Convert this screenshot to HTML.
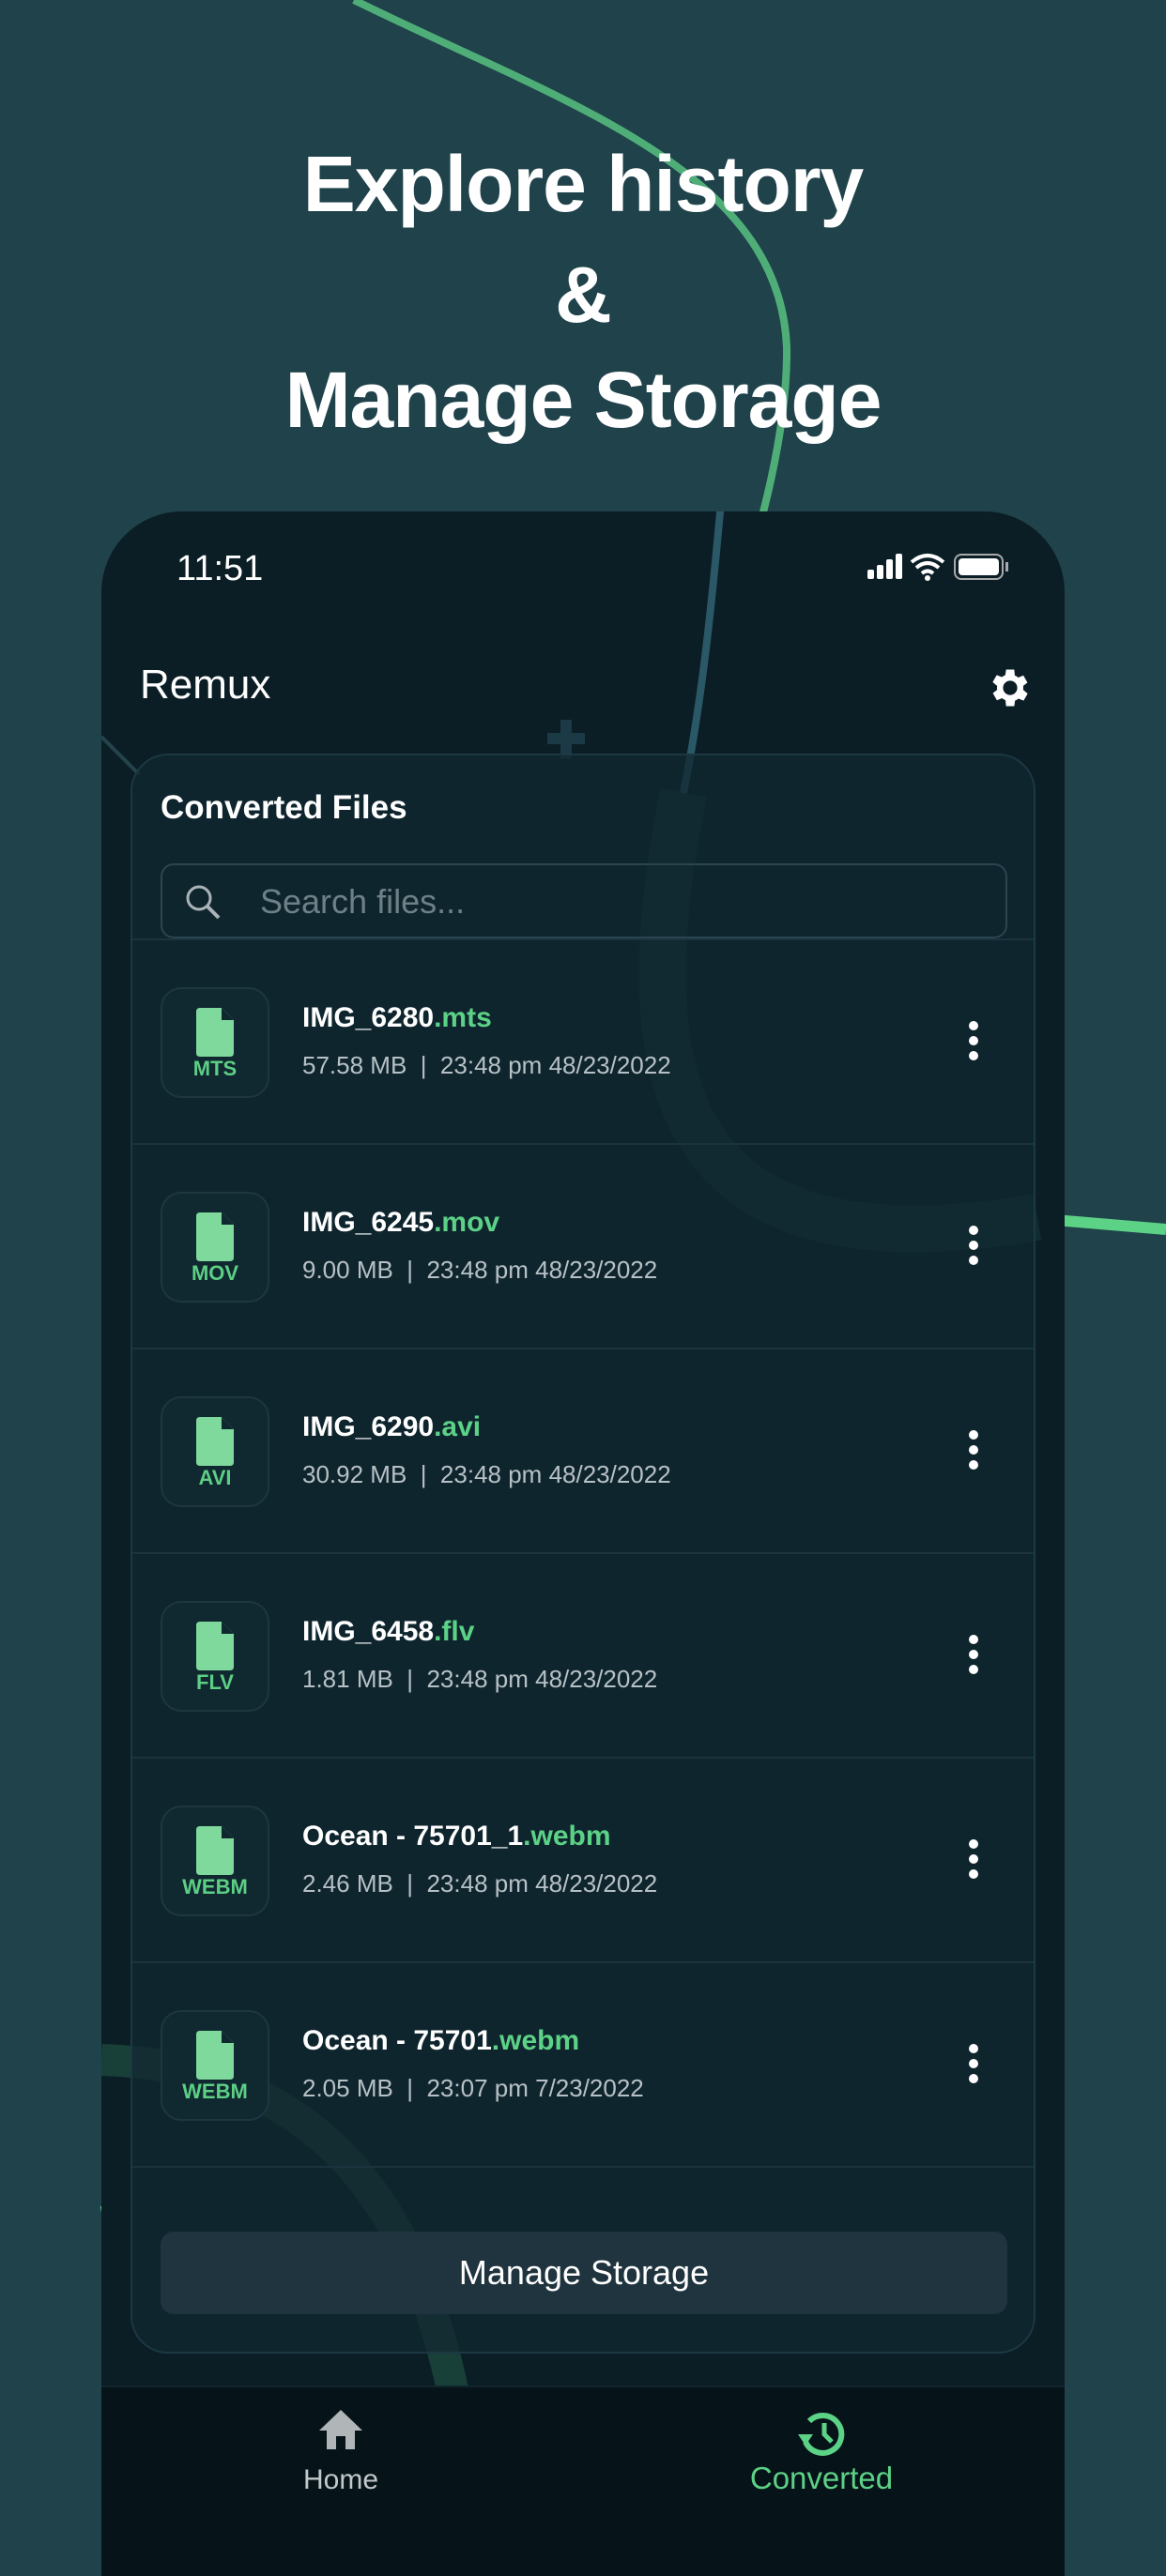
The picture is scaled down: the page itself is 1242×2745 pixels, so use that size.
<!DOCTYPE html>
<html><head><meta charset="utf-8"><style>
*{margin:0;padding:0;box-sizing:border-box}
body{width:1242px;height:2688px;background:#1f424b;position:relative;overflow:hidden;font-family:"Liberation Sans",sans-serif;color:#fff}
.h{position:absolute;left:0;width:1242px;text-align:center;font-weight:bold;font-size:84px;letter-spacing:-1px}
.phone{position:absolute;left:108px;top:545px;width:1026px;height:2200px;background:#0b1d25;border-radius:86px 86px 0 0;overflow:hidden}
.abs{position:absolute}
.card{position:absolute;left:31px;top:258px;width:964px;height:1705px;background:rgba(18,40,50,.75);border:2px solid #1c3842;border-radius:40px}
.row{position:absolute;left:0;width:960px;height:218px;border-top:2px solid #1a333d}
.ic{position:absolute;left:30px;top:50px;width:116px;height:118px;border:2px solid #1d3640;border-radius:22px;background:#102830}
.ic span{position:absolute;bottom:16px;width:100%;text-align:center;color:#5ccf85;font-weight:bold;font-size:22px}
.nm{position:absolute;left:181px;top:66px;font-weight:bold;font-size:30px}
.nm b{color:#5cd286}
.mt{position:absolute;left:181px;top:118px;font-size:26px;color:#b7c1c5}
.dots{position:absolute;left:891px;top:86px;width:10px}
.dots i{display:block;width:10px;height:10px;border-radius:5px;background:#fff;margin-bottom:6px}
</style></head><body>
<svg class="abs" style="left:0;top:0" width="1242" height="2688">
<path d="M377 0 C600 110 830 180 838 370 C840 520 760 700 730 830" stroke="#4fae78" stroke-width="8" fill="none"/>
<path d="M1100 1298 L1242 1310" stroke="#5cd286" stroke-width="12" fill="none"/>
<path d="M108 2358 L140 2352" stroke="#5cd286" stroke-width="14" fill="none"/>
</svg>
<div class="h" style="top:148px">Explore history</div>
<div class="h" style="top:266px">&amp;</div>
<div class="h" style="top:378px">Manage Storage</div>
<div class="phone">
<svg class="abs" style="left:0;top:0" width="1026" height="2200">
<path d="M660 -10 C650 100 640 200 620 300" stroke="#2a5866" stroke-width="8" fill="none"/>
<path d="M620 300 C560 600 600 820 997 752" stroke="#1f4f4a" stroke-width="50" fill="none" opacity=".3"/>
<path d="M0 240 L40 280" stroke="#24434c" stroke-width="4"/>
<rect x="489" y="222" width="12" height="42" fill="#1c3a46"/><rect x="475" y="236" width="40" height="12" fill="#1c3a46"/>
<path d="M0 1650 C300 1660 380 1900 400 2200" stroke="#2b6a52" stroke-width="34" fill="none" opacity=".45"/>
<path d="M380 2000 L395 2050" stroke="#5cd286" stroke-width="14"/>
<path d="M540 2000 L548 2050" stroke="#1c3a46" stroke-width="3"/>
</svg>
<div class="abs" style="left:80px;top:40px;font-size:38px">11:51</div>
<svg class="abs" style="left:808px;top:42px" width="180" height="34">
<rect x="8" y="20" width="7" height="10" rx="2" fill="#fff"/><rect x="18" y="15" width="7" height="15" rx="2" fill="#fff"/><rect x="28" y="9" width="7" height="21" rx="2" fill="#fff"/><rect x="38" y="3" width="7" height="27" rx="2" fill="#fff"/>
<path d="M55 12 Q72 -2 89 12 M60 18 Q72 8 84 18 M66 24 Q72 19 78 24" stroke="#fff" stroke-width="4" fill="none"/><circle cx="72" cy="29" r="3" fill="#fff"/>
<rect x="101" y="4" width="51" height="26" rx="7" stroke="#aaa" stroke-width="2" fill="none"/><rect x="105" y="8" width="43" height="18" rx="4" fill="#fff"/><rect x="155" y="12" width="3" height="10" fill="#aaa"/>
</svg>
<div class="abs" style="left:41px;top:160px;font-size:44px">Remux</div>
<svg class="abs" style="left:942px;top:162px" width="52" height="52" viewBox="0 0 24 24"><path fill="#fff" d="M19.4 13a7.5 7.5 0 0 0 0-2l2.1-1.6-2-3.5-2.5 1a7.3 7.3 0 0 0-1.7-1L15 3h-4l-.4 2.7a7.3 7.3 0 0 0-1.7 1l-2.5-1-2 3.5L6.6 11a7.5 7.5 0 0 0 0 2l-2.1 1.6 2 3.5 2.5-1a7.3 7.3 0 0 0 1.7 1L11 21h4l.4-2.7a7.3 7.3 0 0 0 1.7-1l2.5 1 2-3.5zM13 15.5A3.5 3.5 0 1 1 13 8.5a3.5 3.5 0 0 1 0 7z" transform="translate(-1 0)"/></svg>
<div class="card">
<div class="abs" style="left:30px;top:36px;font-weight:bold;font-size:35px">Converted Files</div>
<div class="abs" style="left:30px;top:115px;width:902px;height:80px;border:2px solid #2a4550;border-radius:14px">
<svg class="abs" style="left:22px;top:18px" width="44" height="44"><circle cx="17" cy="17" r="12" stroke="#aab4b8" stroke-width="3" fill="none"/><path d="M26 26 L38 38" stroke="#aab4b8" stroke-width="4"/></svg>
<div class="abs" style="left:104px;top:18px;font-size:36px;color:#6e8087">Search files...</div>
</div>
<div class="row" style="top:195px"><div class="ic"><svg class="abs" style="left:36px;top:20px" width="42" height="52"><path d="M4 0H27L40 13V48Q40 52 36 52H4Q0 52 0 48V4Q0 0 4 0Z" fill="#7fd89c"/><path d="M27 0V13H40Z" fill="#0f2830"/></svg><span>MTS</span></div><div class="nm">IMG_6280<b>.mts</b></div><div class="mt">57.58 MB &nbsp;| &nbsp;23:48 pm 48/23/2022</div><div class="dots"><i></i><i></i><i></i></div></div>
<div class="row" style="top:413px"><div class="ic"><svg class="abs" style="left:36px;top:20px" width="42" height="52"><path d="M4 0H27L40 13V48Q40 52 36 52H4Q0 52 0 48V4Q0 0 4 0Z" fill="#7fd89c"/><path d="M27 0V13H40Z" fill="#0f2830"/></svg><span>MOV</span></div><div class="nm">IMG_6245<b>.mov</b></div><div class="mt">9.00 MB &nbsp;| &nbsp;23:48 pm 48/23/2022</div><div class="dots"><i></i><i></i><i></i></div></div>
<div class="row" style="top:631px"><div class="ic"><svg class="abs" style="left:36px;top:20px" width="42" height="52"><path d="M4 0H27L40 13V48Q40 52 36 52H4Q0 52 0 48V4Q0 0 4 0Z" fill="#7fd89c"/><path d="M27 0V13H40Z" fill="#0f2830"/></svg><span>AVI</span></div><div class="nm">IMG_6290<b>.avi</b></div><div class="mt">30.92 MB &nbsp;| &nbsp;23:48 pm 48/23/2022</div><div class="dots"><i></i><i></i><i></i></div></div>
<div class="row" style="top:849px"><div class="ic"><svg class="abs" style="left:36px;top:20px" width="42" height="52"><path d="M4 0H27L40 13V48Q40 52 36 52H4Q0 52 0 48V4Q0 0 4 0Z" fill="#7fd89c"/><path d="M27 0V13H40Z" fill="#0f2830"/></svg><span>FLV</span></div><div class="nm">IMG_6458<b>.flv</b></div><div class="mt">1.81 MB &nbsp;| &nbsp;23:48 pm 48/23/2022</div><div class="dots"><i></i><i></i><i></i></div></div>
<div class="row" style="top:1067px"><div class="ic"><svg class="abs" style="left:36px;top:20px" width="42" height="52"><path d="M4 0H27L40 13V48Q40 52 36 52H4Q0 52 0 48V4Q0 0 4 0Z" fill="#7fd89c"/><path d="M27 0V13H40Z" fill="#0f2830"/></svg><span>WEBM</span></div><div class="nm">Ocean - 75701_1<b>.webm</b></div><div class="mt">2.46 MB &nbsp;| &nbsp;23:48 pm 48/23/2022</div><div class="dots"><i></i><i></i><i></i></div></div>
<div class="row" style="top:1285px"><div class="ic"><svg class="abs" style="left:36px;top:20px" width="42" height="52"><path d="M4 0H27L40 13V48Q40 52 36 52H4Q0 52 0 48V4Q0 0 4 0Z" fill="#7fd89c"/><path d="M27 0V13H40Z" fill="#0f2830"/></svg><span>WEBM</span></div><div class="nm">Ocean - 75701<b>.webm</b></div><div class="mt">2.05 MB &nbsp;| &nbsp;23:07 pm 7/23/2022</div><div class="dots"><i></i><i></i><i></i></div></div>
<div class="row" style="top:1503px"></div>
<div class="abs" style="left:30px;top:1573px;width:902px;height:88px;background:#1f343e;border-radius:14px;text-align:center;line-height:88px;font-size:36px">Manage Storage</div>
</div>
<div class="abs" style="left:0;top:1997px;width:1026px;height:210px;background:#061419;border-top:2px solid #10252c">
<svg class="abs" style="left:230px;top:22px" width="50" height="46"><path d="M25 2 L48 24 H40 V44 H30 V30 H20 V44 H10 V24 H2 Z" fill="#b0b5b8"/></svg>
<div class="abs" style="left:150px;top:82px;width:210px;text-align:center;font-size:30px;color:#c3c8cb">Home</div>
<svg class="abs" style="left:738px;top:22px" width="56" height="52" viewBox="0 0 28 26"><path d="M8 7 A10 10 0 1 1 6 18" stroke="#5cd286" stroke-width="3" fill="none"/><path d="M2 14 L6 20 L10 14Z" fill="#5cd286"/><path d="M16 8 V14 L20 18" stroke="#5cd286" stroke-width="2.5" fill="none"/></svg>
<div class="abs" style="left:650px;top:78px;width:234px;text-align:center;font-size:33px;color:#5cd286">Converted</div>
</div>
</div>
</body></html>
